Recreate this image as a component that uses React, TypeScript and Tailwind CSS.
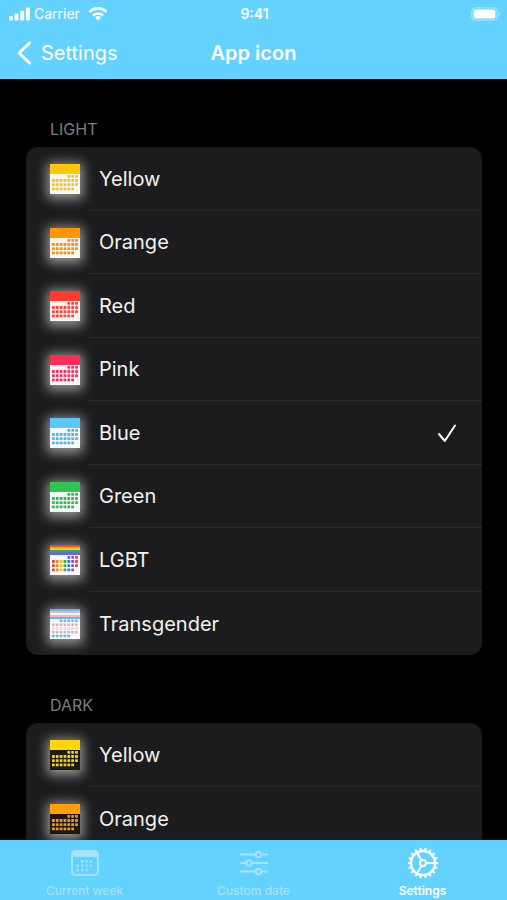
import { useState } from "react";

type IconTheme = {
  id: string;
  name: string;
  stripes: string[];
  paper: string;
  dots: string[];
  dense?: boolean;
};

const RAINBOW = ["#e8453c", "#f08a2a", "#ecc52a", "#3fa94a", "#2f78dc", "#8a52d0", "#e8453c"];

const LIGHT: IconTheme[] = [
  { id: "light-yellow", name: "Yellow", stripes: ["#ffc60a"], paper: "#fbf8ef", dots: ["#f6c22c"] },
  { id: "light-orange", name: "Orange", stripes: ["#ff9500"], paper: "#fbf5ee", dots: ["#f39018"] },
  { id: "light-red", name: "Red", stripes: ["#ff3b30"], paper: "#faf3f1", dots: ["#f5473c"] },
  { id: "light-pink", name: "Pink", stripes: ["#ff2d55"], paper: "#faf2f4", dots: ["#ea3560"] },
  { id: "light-blue", name: "Blue", stripes: ["#5ac8fa"], paper: "#f7fafc", dots: ["#4fb4ee"] },
  { id: "light-green", name: "Green", stripes: ["#30c552"], paper: "#f3faf4", dots: ["#32bb55"] },
  {
    id: "light-lgbt",
    name: "LGBT",
    stripes: ["#ee3f32", "#fb9a24", "#f2ce2e", "#3fa950", "#3f7fdd", "#8c56d6"],
    paper: "#faf9fb",
    dots: RAINBOW,
  },
  {
    id: "light-transgender",
    name: "Transgender",
    stripes: ["#62bce8", "#f5b3c2", "#fbf6f8", "#f5b3c2", "#62bce8"],
    paper: "#f8f7f9",
    dots: ["#56bdec", "#f3a0b3", "#e4d6db", "#f3a0b3", "#56bdec"],
    dense: true,
  },
];

const DARK: IconTheme[] = [
  { id: "dark-yellow", name: "Yellow", stripes: ["#ffd60a"], paper: "#1c1b12", dots: ["#f0cf1c"] },
  { id: "dark-orange", name: "Orange", stripes: ["#ff9f0a"], paper: "#1c1710", dots: ["#f09716"] },
];

function CalendarIcon({ theme }: { theme: IconTheme }) {
  const head = 10;
  const band = head / theme.stripes.length;
  const rows = theme.dense ? 5 : 4;
  const size = theme.dense ? 2.5 : 2.8;
  const dots = [];
  for (let r = 0; r < rows; r++) {
    for (let c = 0; c < 7; c++) {
      if (r === 0 && c < (theme.dense ? 2 : 4)) continue;
      if (r === rows - 1 && c > (theme.dense ? 4 : 5)) continue;
      const fill = theme.dense ? theme.dots[r] : theme.dots[c % theme.dots.length];
      dots.push(
        <rect
          key={`${r}-${c}`}
          x={2 + c * 3.85}
          y={theme.dense ? 10.6 + r * 3.8 : 10.9 + r * 4.2}
          width={size}
          height={size}
          rx={0.4}
          fill={fill}
        />,
      );
    }
  }
  return (
    <svg viewBox="0 0 30 30" className="size-[30px] shrink-0 shadow-[0_2px_12px_3px_rgba(255,255,255,0.55)]" aria-hidden="true">
      <rect width="30" height="30" fill={theme.paper} />
      {theme.stripes.map((color, i) => (
        <rect key={i} y={i * band} width="30" height={head - i * band} fill={color} />
      ))}
      {dots}
    </svg>
  );
}

function Section({
  title,
  items,
  selected,
  onSelect,
}: {
  title: string;
  items: IconTheme[];
  selected: string;
  onSelect: (id: string) => void;
}) {
  return (
    <section>
      <h2 className="px-6 pb-2 text-base leading-5 text-[#7d7d82]">{title}</h2>
      <ul className="overflow-hidden rounded-xl bg-[#1c1c1e]">
        {items.map((item, i) => (
          <li key={item.id} className="odd:h-16 even:h-[63px]">
            <button
              type="button"
              aria-pressed={item.id === selected}
              onClick={() => onSelect(item.id)}
              className="flex h-full w-full items-stretch gap-2 pl-6 text-left"
            >
              <span className="flex items-center">
                <CalendarIcon theme={item} />
              </span>
              <span
                className={`flex flex-1 items-center justify-between pr-6 pl-[11px] ${
                  i < items.length - 1 ? "border-b border-[#2b2b2e]" : ""
                }`}
              >
                <span className="text-xl text-[#f2f2f2]">{item.name}</span>
                {item.id === selected && (
                  <svg viewBox="0 0 22 22" className="size-[22px]" fill="none" stroke="#fff" strokeWidth="2" strokeLinecap="round" strokeLinejoin="round" aria-hidden="true">
                    <path d="M3 12 8.8 19 19 3.5" />
                  </svg>
                )}
              </span>
            </button>
          </li>
        ))}
      </ul>
    </section>
  );
}

function StatusBar() {
  return (
    <div className="grid h-[27px] grid-cols-3 items-center pr-[6px] pl-2 text-sm leading-4">
      <div className="flex items-center gap-1">
        <svg viewBox="0 0 22 14" className="h-[14px] w-[22px]" fill="#fff" aria-hidden="true">
          <rect x="1" y="9" width="4" height="4.5" rx="1.2" />
          <rect x="6.5" y="6.6" width="4" height="6.9" rx="1.2" />
          <rect x="12.2" y="3.8" width="4" height="9.7" rx="1.2" />
          <rect x="17.9" y="0.6" width="4" height="12.9" rx="1.2" />
        </svg>
        <span>Carrier</span>
        <svg viewBox="0 0 20 15" className="ml-1 h-[15px] w-5" fill="none" stroke="#fff" strokeWidth="2.7" aria-hidden="true">
          <path d="M1.5 5.9a12.2 12.2 0 0 1 17 0" />
          <path d="M5 9.5a7.2 7.2 0 0 1 10 0" />
          <path d="M10 14.5 7 11.5a4.3 4.3 0 0 1 6 0Z" fill="#fff" stroke="none" />
        </svg>
      </div>
      <span className="text-center font-semibold">9:41</span>
      <svg viewBox="0 0 30 14" className="h-[14px] w-[30px] justify-self-end" aria-hidden="true">
        <rect x="0.8" y="0.8" width="25.4" height="12.4" rx="4" fill="none" stroke="#fff" strokeOpacity="0.4" strokeWidth="1.3" />
        <rect x="2.6" y="2.6" width="21.8" height="8.8" rx="2" fill="#fff" />
        <path d="M27.6 5v4a2.2 2.2 0 0 0 0-4Z" fill="#fff" fillOpacity="0.5" />
      </svg>
    </div>
  );
}

function WeekIcon() {
  const points = [
    [2, 0], [3, 0], [4, 0],
    [1, 1], [2, 1], [3, 1], [4, 1],
    [1, 2], [2, 2], [3, 2],
  ];
  return (
    <svg viewBox="0 0 32 32" className="size-8" fill="none" aria-hidden="true">
      <rect x="3" y="4" width="26" height="24" rx="3.5" stroke="currentColor" strokeWidth="2" />
      <path d="M3 10V7.5A3.5 3.5 0 0 1 6.5 4h19A3.5 3.5 0 0 1 29 7.5V10Z" fill="currentColor" />
      {points.map(([c, r]) => (
        <rect key={`${c}-${r}`} x={3.2 + c * 4.4} y={13 + r * 4.4} width="2.4" height="2.4" rx="0.8" fill="currentColor" />
      ))}
    </svg>
  );
}

function SlidersIcon() {
  return (
    <svg viewBox="0 0 32 32" className="size-8" fill="none" stroke="currentColor" strokeWidth="2" strokeLinecap="round" aria-hidden="true">
      <path d="M3 7.5H17.5M23.5 7.5H29M3 16H8M14 16H29M3 24.5H17.5M23.5 24.5H29" />
      <circle cx="20.5" cy="7.5" r="2.7" />
      <circle cx="11" cy="16" r="2.7" />
      <circle cx="20.5" cy="24.5" r="2.7" />
    </svg>
  );
}

function GearIcon() {
  return (
    <svg viewBox="0 0 32 32" className="size-8" fill="none" stroke="currentColor" aria-hidden="true">
      <circle cx="16" cy="16" r="12" strokeWidth="2.4" />
      {Array.from({ length: 18 }, (_, i) => (
        <path key={i} d="M14.6 3.6 15.2 0.7H16.8L17.4 3.6Z" fill="currentColor" stroke="none" transform={`rotate(${i * 20 + 10} 16 16)`} />
      ))}
      <circle cx="16" cy="16" r="3" strokeWidth="1.8" />
      <path d="M19 16H28M14.5 13.4 10 5.6M14.5 18.6 10 26.4" strokeWidth="2" />
    </svg>
  );
}

const TABS = [
  { name: "Current week", Icon: WeekIcon },
  { name: "Custom date", Icon: SlidersIcon },
  { name: "Settings", Icon: GearIcon },
];

export default function App() {
  const [selected, setSelected] = useState("light-blue");
  const [tab, setTab] = useState("Settings");

  return (
    <div className="flex h-screen flex-col overflow-hidden bg-black font-['Inter','Liberation_Sans',sans-serif] text-white">
      <header className="shrink-0 bg-[#64d2ff]">
        <StatusBar />
        <div className="grid h-[52px] grid-cols-3 items-center px-4 text-xl">
          <button type="button" className="flex items-center gap-[9px]">
            <svg viewBox="0 0 16 24" className="h-6 w-4" fill="none" stroke="#fff" strokeWidth="3" strokeLinecap="round" strokeLinejoin="round" aria-hidden="true">
              <path d="M13.5 2 3 12 13.5 22" />
            </svg>
            Settings
          </button>
          <h1 className="text-center font-semibold">App icon</h1>
        </div>
      </header>

      <main className="min-h-0 flex-1 space-y-10 overflow-hidden pt-10 pr-[25px] pl-[26px]">
        <Section title="LIGHT" items={LIGHT} selected={selected} onSelect={setSelected} />
        <Section title="DARK" items={DARK} selected={selected} onSelect={setSelected} />
      </main>

      <nav className="grid h-[60px] shrink-0 grid-cols-3 bg-[#64d2ff]">
        {TABS.map(({ name, Icon }) => (
          <button
            key={name}
            type="button"
            onClick={() => setTab(name)}
            className={`flex flex-col items-center gap-1 pt-[7px] text-xs ${
              tab === name ? "font-semibold text-white" : "font-medium text-[#a5e2fd]"
            }`}
          >
            <Icon />
            {name}
          </button>
        ))}
      </nav>
    </div>
  );
}
